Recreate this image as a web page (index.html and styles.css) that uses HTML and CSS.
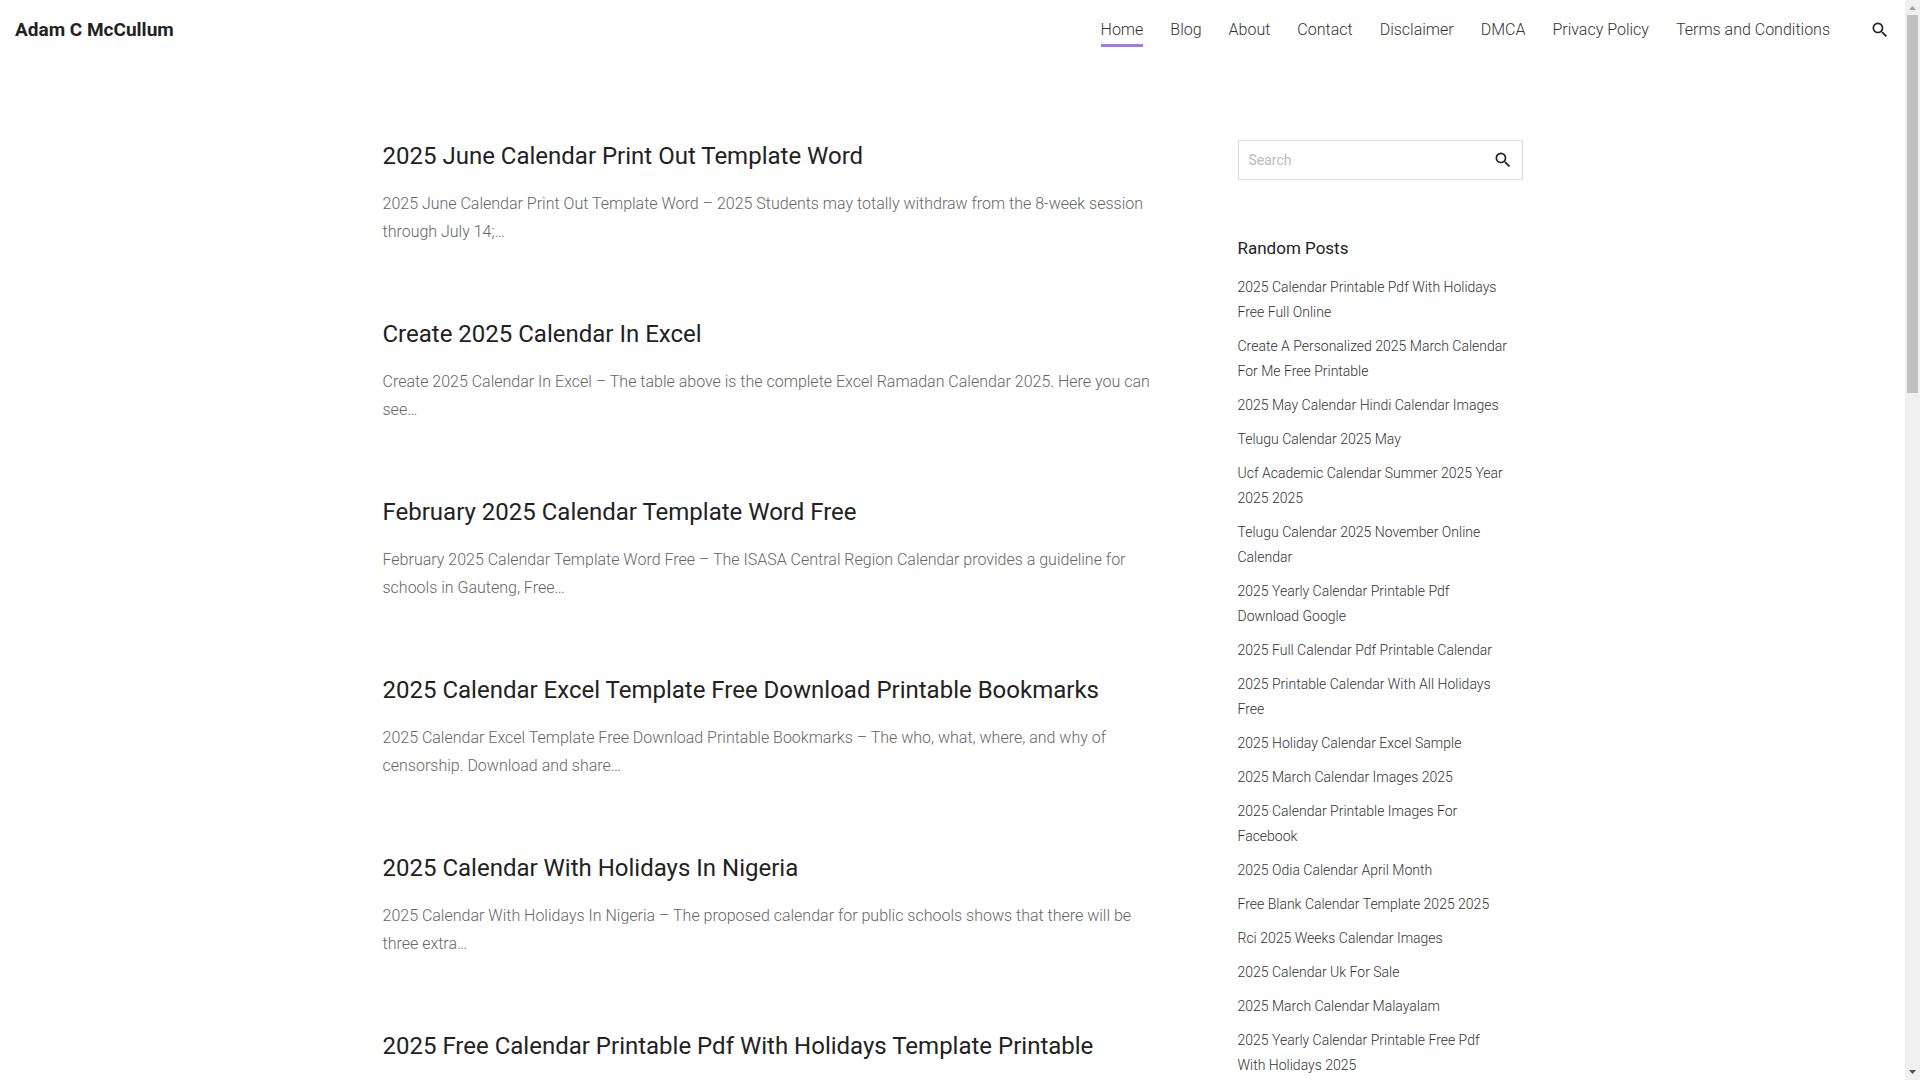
FILE: index.html
```html
<!DOCTYPE html>
<html lang="en">

<head>
    <meta charset="UTF-8">
    <meta name="viewport" content="width=device-width, initial-scale=1.0">
    <title>Adam C McCullum</title>
    <link rel="stylesheet" href="styles.css">
</head>

<body>
    <header class="site-header">
        <a class="site-title" href="#">Adam C McCullum</a>
        <nav class="main-nav">
            <a class="current" href="#">Home</a>
            <a href="#">Blog</a>
            <a href="#">About</a>
            <a href="#">Contact</a>
            <a href="#">Disclaimer</a>
            <a href="#">DMCA</a>
            <a href="#">Privacy Policy</a>
            <a href="#">Terms and Conditions</a>
        </nav>
        <button class="icon-button" type="button" aria-label="Open search">
            <svg viewBox="0 0 24 24"><path d="M15.5 14h-.79l-.28-.27A6.471 6.471 0 0 0 16 9.5 6.5 6.5 0 1 0 9.5 16c1.61 0 3.09-.59 4.23-1.57l.27.28v.79l5 4.99L20.49 19l-4.99-5zm-6 0C7.01 14 5 11.99 5 9.5S7.01 5 9.5 5 14 7.01 14 9.5 11.99 14 9.5 14z"/></svg>
        </button>
    </header>

    <div class="content">
        <main class="posts">
            <article>
                <h2><a href="#">2025 June Calendar Print Out Template Word</a></h2>
                <p>2025 June Calendar Print Out Template Word – 2025 Students may totally withdraw from the 8-week session through July 14;…</p>
            </article>
            <article>
                <h2><a href="#">Create 2025 Calendar In Excel</a></h2>
                <p>Create 2025 Calendar In Excel – The table above is the complete Excel Ramadan Calendar 2025. Here you can see…</p>
            </article>
            <article>
                <h2><a href="#">February 2025 Calendar Template Word Free</a></h2>
                <p>February 2025 Calendar Template Word Free – The ISASA Central Region Calendar provides a guideline for schools in Gauteng, Free…</p>
            </article>
            <article>
                <h2><a href="#">2025 Calendar Excel Template Free Download Printable Bookmarks</a></h2>
                <p>2025 Calendar Excel Template Free Download Printable Bookmarks – The who, what, where, and why of censorship. Download and share…</p>
            </article>
            <article>
                <h2><a href="#">2025 Calendar With Holidays In Nigeria</a></h2>
                <p>2025 Calendar With Holidays In Nigeria – The proposed calendar for public schools shows that there will be three extra…</p>
            </article>
            <article>
                <h2><a href="#">2025 Free Calendar Printable Pdf With Holidays Template Printable</a></h2>
            </article>
        </main>

        <aside class="sidebar">
            <form class="search-form" role="search">
                <input type="search" placeholder="Search" aria-label="Search">
                <button class="icon-button" type="submit" aria-label="Search">
                    <svg viewBox="0 0 24 24"><path d="M15.5 14h-.79l-.28-.27A6.471 6.471 0 0 0 16 9.5 6.5 6.5 0 1 0 9.5 16c1.61 0 3.09-.59 4.23-1.57l.27.28v.79l5 4.99L20.49 19l-4.99-5zm-6 0C7.01 14 5 11.99 5 9.5S7.01 5 9.5 5 14 7.01 14 9.5 11.99 14 9.5 14z"/></svg>
                </button>
            </form>
            <h3>Random Posts</h3>
            <ul>
                <li><a href="#">2025 Calendar Printable Pdf With Holidays Free Full Online</a></li>
                <li><a href="#">Create A Personalized 2025 March Calendar For Me Free Printable</a></li>
                <li><a href="#">2025 May Calendar Hindi Calendar Images</a></li>
                <li><a href="#">Telugu Calendar 2025 May</a></li>
                <li><a href="#">Ucf Academic Calendar Summer 2025 Year 2025 2025</a></li>
                <li><a href="#">Telugu Calendar 2025 November Online Calendar</a></li>
                <li><a href="#">2025 Yearly Calendar Printable Pdf Download Google</a></li>
                <li><a href="#">2025 Full Calendar Pdf Printable Calendar</a></li>
                <li><a href="#">2025 Printable Calendar With All Holidays Free</a></li>
                <li><a href="#">2025 Holiday Calendar Excel Sample</a></li>
                <li><a href="#">2025 March Calendar Images 2025</a></li>
                <li><a href="#">2025 Calendar Printable Images For Facebook</a></li>
                <li><a href="#">2025 Odia Calendar April Month</a></li>
                <li><a href="#">Free Blank Calendar Template 2025 2025</a></li>
                <li><a href="#">Rci 2025 Weeks Calendar Images</a></li>
                <li><a href="#">2025 Calendar Uk For Sale</a></li>
                <li><a href="#">2025 March Calendar Malayalam</a></li>
                <li><a href="#">2025 Yearly Calendar Printable Free Pdf With Holidays 2025</a></li>
            </ul>
        </aside>
    </div>

    <div class="scrollbar" aria-hidden="true">
        <svg class="arrow-up" viewBox="0 0 15 15"><path d="M4 10h7L7.500 6z"/></svg>
        <div class="thumb"></div>
        <svg class="arrow-down" viewBox="0 0 15 15"><path d="M4 5h7L7.500 9z"/></svg>
    </div>
</body>

</html>
```

FILE: styles.css
```css
* {
    box-sizing: border-box;
}

body {
    margin: 0;
    padding-right: 15px;
    height: 100vh;
    overflow: hidden;
    background-color: #fff;
    color: #666;
    font-family: Roboto, sans-serif;
    font-size: 16px;
    font-weight: 300;
    line-height: 28px;
}

a {
    color: inherit;
    text-decoration: none;
}

h2,
h3,
p,
ul {
    margin: 0;
}

/* Header */
.site-header {
    display: flex;
    align-items: center;
    height: 60px;
    padding: 0 15px;
}

.site-title {
    margin-right: auto;
    color: #222;
    font-size: 19px;
    font-weight: 700;
}

.main-nav {
    display: flex;
    gap: 27px;
    margin-right: 40px;
    color: #333;
}

.main-nav a {
    padding-top: 3px;
    border-bottom: 3px solid transparent;
}

.main-nav .current {
    border-bottom-color: #a07be8;
}

.icon-button {
    display: flex;
    padding: 0;
    border: 0;
    background: none;
    cursor: pointer;
}

.icon-button svg {
    width: 20px;
    height: 20px;
    fill: #222;
}

/* Posts and sidebar */
.content {
    display: grid;
    grid-template-columns: 1fr 285px;
    gap: 48px;
    width: 100%;
    max-width: 1140px;
    margin: 0 auto;
    padding-top: 80px;
}

.posts article {
    margin-bottom: 60px;
}

.posts h2 {
    margin-bottom: 18px;
    color: #222;
    font-size: 24px;
    font-weight: 400;
    line-height: 32px;
}

.posts p {
    padding-right: 26px;
    padding-bottom: 12px;
}

.search-form {
    display: flex;
    align-items: center;
    height: 40px;
    margin-bottom: 53px;
    padding-right: 9px;
    border: 1px solid #ddd;
}

.search-form input {
    flex: 1;
    min-width: 0;
    padding: 0 10px;
    border: 0;
    outline: 0;
    background: none;
    font-family: inherit;
    font-size: 14px;
}

.search-form input::placeholder {
    color: #bbb;
}

.sidebar h3 {
    margin-bottom: 12px;
    color: #222;
    font-size: 17px;
    font-weight: 400;
    line-height: 30px;
}

.sidebar ul {
    padding: 0 13px 0 0;
    list-style: none;
    color: #333;
    font-size: 14px;
    line-height: 25px;
}

.sidebar li {
    margin-bottom: 9px;
}

/* Scrollbar */
.scrollbar {
    position: fixed;
    top: 0;
    right: 0;
    bottom: 0;
    display: flex;
    flex-direction: column;
    width: 15px;
    background-color: #f0f0f0;
}

.scrollbar svg {
    width: 15px;
    height: 15px;
}

.arrow-up {
    fill: #a0a0a0;
}

.arrow-down {
    margin-top: auto;
    fill: #505050;
}

.thumb {
    height: 35%;
    margin: 0 2px;
    background-color: #c0c0c0;
}
```
